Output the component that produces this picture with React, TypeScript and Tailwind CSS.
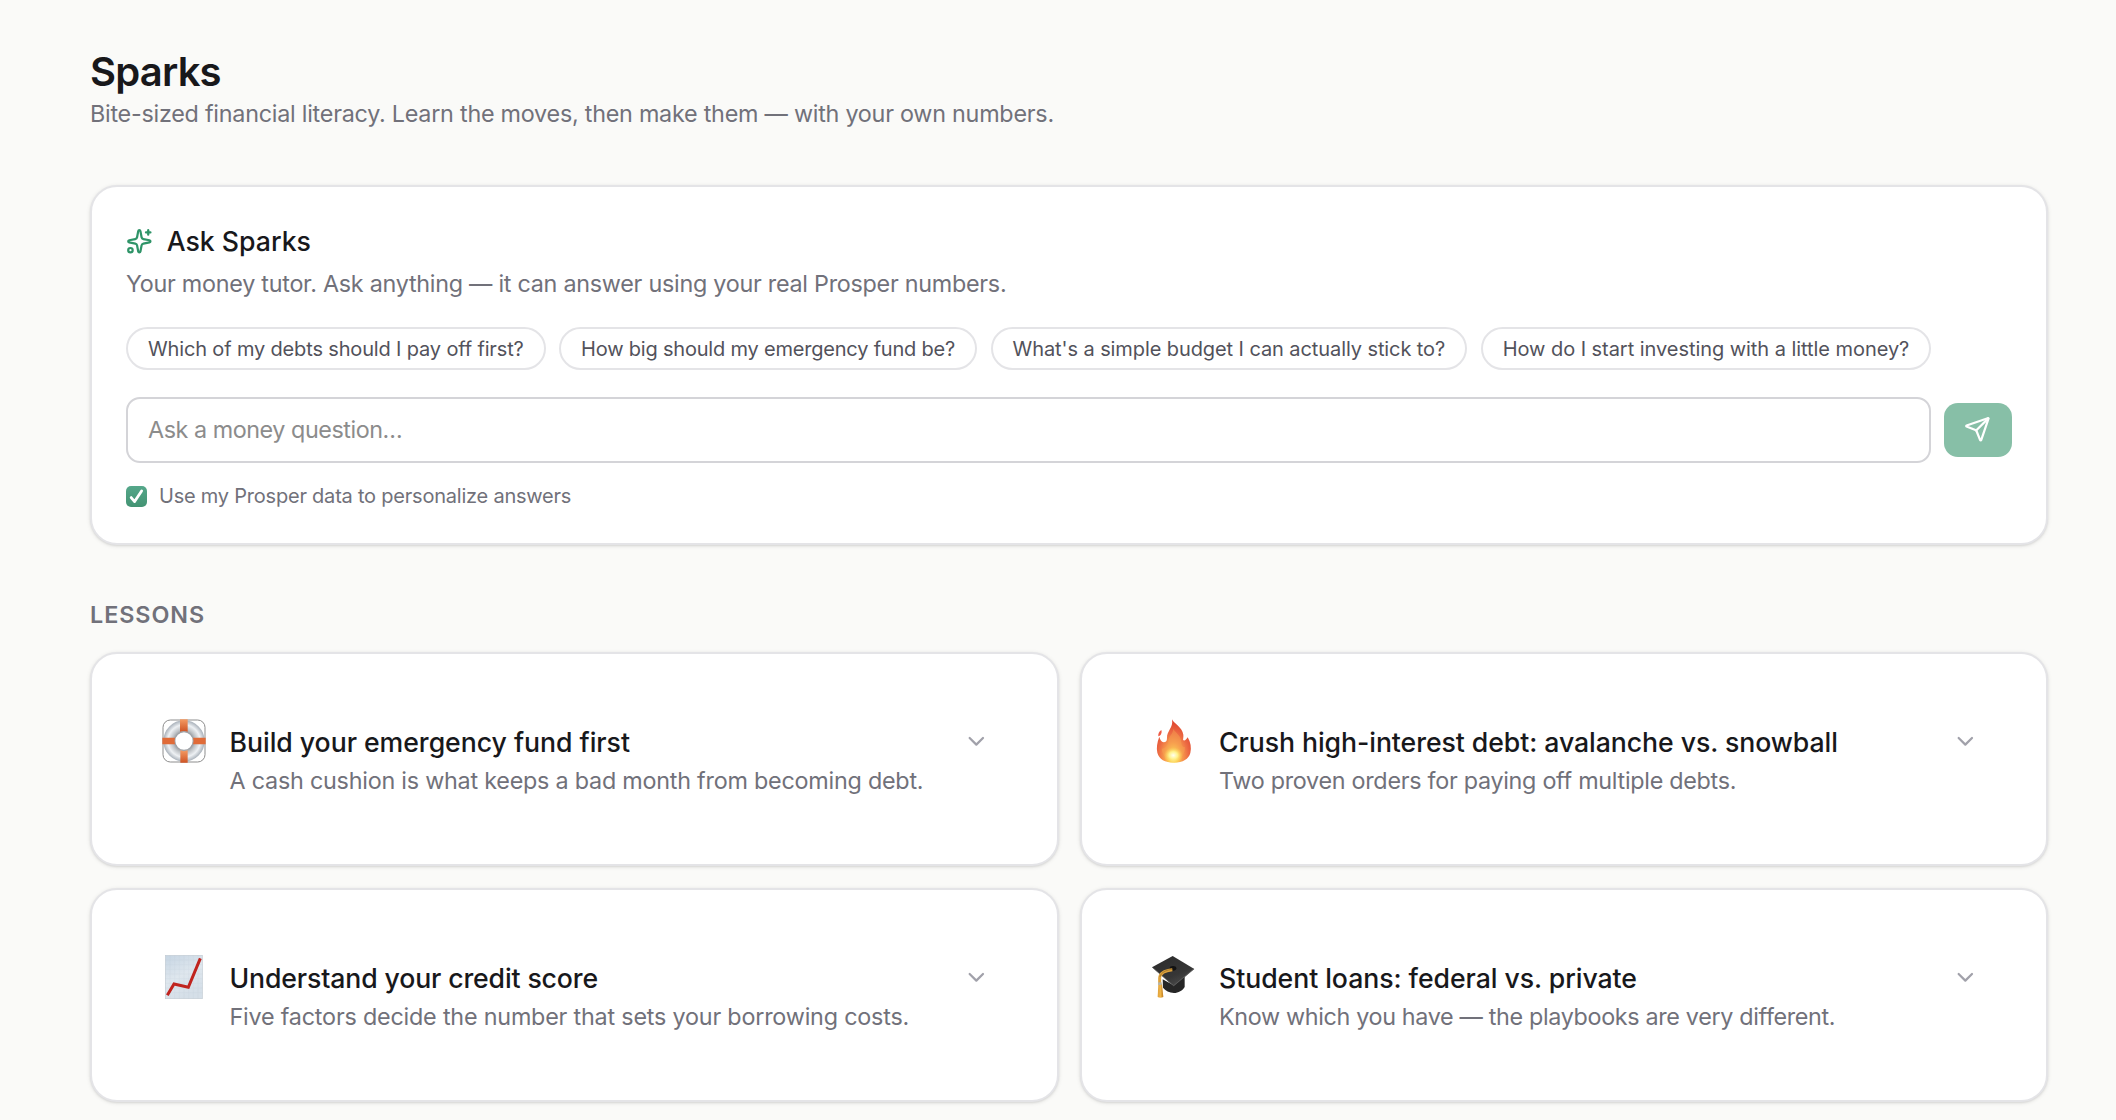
import { ChevronDown, Send } from 'lucide-react';
import { useState, type ReactNode } from 'react';

const suggestions = [
    { text: 'Which of my debts should I pay off first?', tracking: 'tracking-[-0.155px]' },
    { text: 'How big should my emergency fund be?', tracking: 'tracking-[-0.2px]' },
    { text: "What's a simple budget I can actually stick to?", tracking: 'tracking-[-0.09px]' },
    { text: 'How do I start investing with a little money?', tracking: 'tracking-[-0.05px]' },
];

function SparklesIcon() {
    return (
        <svg viewBox="0 0 24 24" fill="none" stroke="currentColor" strokeWidth="2" strokeLinecap="round" strokeLinejoin="round" className="size-[26.67px] text-[#2f9468]">
            <path d="M11.017 2.814a1 1 0 0 1 1.966 0l1.051 5.558a2 2 0 0 0 1.594 1.594l5.558 1.051a1 1 0 0 1 0 1.966l-5.558 1.051a2 2 0 0 0-1.594 1.594l-1.051 5.558a1 1 0 0 1-1.966 0l-1.051-5.558a2 2 0 0 0-1.594-1.594l-5.558-1.051a1 1 0 0 1 0-1.966l5.558-1.051a2 2 0 0 0 1.594-1.594z" />
            <path d="M20 2v4" />
            <path d="M22 4h-4" />
            <circle cx="4" cy="20" r="2" />
        </svg>
    );
}

function LifeRing() {
    return (
        <svg viewBox="36 57 132 132" className="size-11">
            <defs>
                <radialGradient id="ring" gradientUnits="userSpaceOnUse" cx="102" cy="123" r="62">
                    <stop offset="0.4" stopColor="#8f9398" />
                    <stop offset="0.56" stopColor="#bfc3c7" />
                    <stop offset="0.78" stopColor="#eef1f4" />
                    <stop offset="1" stopColor="#a9b1ba" />
                </radialGradient>
                <linearGradient id="band" x1="0" y1="0" x2="0" y2="1">
                    <stop offset="0" stopColor="#f49a62" />
                    <stop offset="1" stopColor="#cf5425" />
                </linearGradient>
            </defs>
            <rect x="39" y="60" width="126" height="126" rx="22" fill="none" stroke="#8d8d8d" strokeWidth="3" />
            <circle cx="102" cy="123" r="44" fill="none" stroke="url(#ring)" strokeWidth="36" />
            <path d="M90 58h23v37q-11-4-23 0z" fill="url(#band)" />
            <path d="M91 151q11 5 22 0v37H91z" fill="url(#band)" />
            <path d="M37 113h38q-3 10 0 20H37z" fill="#e06b38" />
            <path d="M129 113h38v20h-38q4-10 0-20z" fill="#e06b38" />
        </svg>
    );
}

function Flame() {
    return (
        <svg viewBox="36 57 132 132" className="size-11">
            <defs>
                <radialGradient id="flame" gradientUnits="userSpaceOnUse" cx="100" cy="170" r="105" gradientTransform="translate(36 0) scale(.64 1)">
                    <stop offset="0" stopColor="#fff8c8" />
                    <stop offset="0.18" stopColor="#fdd957" />
                    <stop offset="0.4" stopColor="#f79a4c" />
                    <stop offset="0.68" stopColor="#ec6a43" />
                    <stop offset="1" stopColor="#df452f" />
                </radialGradient>
                <radialGradient id="core">
                    <stop offset="0" stopColor="#fffef0" />
                    <stop offset="0.45" stopColor="#fff28a" />
                    <stop offset="1" stopColor="#fbc44c" stopOpacity="0" />
                </radialGradient>
            </defs>
            <path d="M96 58c4 12 31 23 34 46 1 9-2 15 0 17 5 2 9-3 13-9 9 15 12 32 8 47-5 18-22 29-49 29s-45-11-50-30c-3-14-1-31 6-48 2 9 6 16 13 17 7 0 10-4 10-13-1-21 20-31 15-56z" fill="url(#flame)" />
            <path d="M64 90c3 8-2 18-9 19-1-8 2-14 9-19z" fill="#ee5a45" />
            <path d="M100 87c9 14 24 20 24 41 0 9 4 13 11 14-1 20-10 36-34 36s-34-13-36-32c11 0 20-9 20-22 0-14 13-20 15-37z" fill="#f7a452" opacity="0.45" />
            <ellipse cx="100" cy="166" rx="29" ry="25" fill="url(#core)" />
        </svg>
    );
}

function RisingChart() {
    return (
        <svg viewBox="36 45 132 132" className="size-11">
            <defs>
                <linearGradient id="paper" x1="0" y1="0" x2="0.4" y2="1">
                    <stop offset="0" stopColor="#c6d5e3" />
                    <stop offset="0.55" stopColor="#dfe7ee" />
                    <stop offset="1" stopColor="#d5dfe8" />
                </linearGradient>
            </defs>
            <rect x="46" y="46" width="111" height="130" fill="url(#paper)" stroke="#c3ccd4" strokeWidth="2" />
            <path d="M60 46v130M74 46v130M88 46v130M102 46v130M116 46v130M130 46v130M144 46v130M46 60h111M46 74h111M46 88h111M46 102h111M46 116h111M46 130h111M46 144h111M46 158h111" stroke="#b9c6d2" strokeWidth="1" opacity="0.4" />
            <path d="M52 166l20-34 43 10 36-87" fill="none" stroke="#c0241e" strokeWidth="9" />
        </svg>
    );
}

function GradCap() {
    return (
        <svg viewBox="36 45 132 132" className="size-11">
            <defs>
                <linearGradient id="board" x1="0" y1="0" x2="0.6" y2="1">
                    <stop offset="0" stopColor="#2b2b2b" />
                    <stop offset="0.7" stopColor="#363636" />
                    <stop offset="1" stopColor="#4a4a4a" />
                </linearGradient>
                <linearGradient id="tassel" x1="0" y1="0" x2="1" y2="0">
                    <stop offset="0" stopColor="#e0a13a" />
                    <stop offset="0.5" stopColor="#f0b548" />
                    <stop offset="1" stopColor="#bd7a1e" />
                </linearGradient>
            </defs>
            <path d="M68 118l33 18 33-28v33c-6 11-19 18-32 18-14-1-26-7-33-16z" fill="#262626" />
            <path d="M98 48l65 39-62 52-65-57z" fill="url(#board)" />
            <path d="M37 82l64 55 61-51" fill="none" stroke="#666" strokeWidth="2" />
            <ellipse cx="99" cy="85" rx="10" ry="7" fill="#121212" />
            <path d="M97 89c-18 2-37 8-38 25v18" fill="none" stroke="#dda13b" strokeWidth="9" />
            <path d="M97 88c-18 2-35 9-37 23" fill="none" stroke="#7a5a22" strokeWidth="1.5" />
            <path d="M55 131h11l4 40q-9 5-17 0z" fill="url(#tassel)" />
            <path d="M54 127h11v8H54z" fill="#b9b4a4" />
        </svg>
    );
}

const lessons = [
    {
        icon: <LifeRing />,
        title: 'Build your emergency fund first',
        titleTracking: 'tracking-[-0.04px]',
        summary: 'A cash cushion is what keeps a bad month from becoming debt.',
        summaryTracking: 'tracking-[-0.225px]',
    },
    {
        icon: <Flame />,
        title: 'Crush high-interest debt: avalanche vs. snowball',
        titleTracking: 'tracking-[-0.07px]',
        summary: 'Two proven orders for paying off multiple debts.',
        summaryTracking: 'tracking-[-0.28px]',
    },
    {
        icon: <RisingChart />,
        title: 'Understand your credit score',
        titleTracking: 'tracking-[-0.14px]',
        summary: 'Five factors decide the number that sets your borrowing costs.',
        summaryTracking: 'tracking-[-0.195px]',
    },
    {
        icon: <GradCap />,
        title: 'Student loans: federal vs. private',
        titleTracking: 'tracking-[-0.06px]',
        summary: 'Know which you have — the playbooks are very different.',
        summaryTracking: 'tracking-[-0.335px]',
    },
];

function Card({ className, children }: { className: string; children: ReactNode }) {
    return (
        <div className={`rounded-[27px] border-2 border-[#e4e4e7] bg-white shadow-[0_1px_4px_rgba(0,0,0,0.1),0_1px_2px_rgba(0,0,0,0.08)] ${className}`}>
            {children}
        </div>
    );
}

function AskSparks() {
    const [question, setQuestion] = useState('');
    const [personalize, setPersonalize] = useState(true);

    return (
        <Card className="mt-[55px] h-[360px] px-[34px] pt-[34px]">
            <div className="flex h-10 items-center gap-[14px]">
                <SparklesIcon />
                <h2 className="text-[26.67px] leading-10 font-medium text-[#18181b]">Ask Sparks</h2>
            </div>
            <p className="mt-[6px] text-[23.33px] leading-[33px] tracking-[-0.26px] text-[#71717a]">
                Your money tutor. Ask anything — it can answer using your real Prosper numbers.
            </p>
            <div className="mt-[27px] flex gap-[13.5px]">
                {suggestions.map((s) => (
                    <button
                        key={s.text}
                        onClick={() => setQuestion(s.text)}
                        className={`h-[43px] rounded-full border-2 border-[#e4e4e7] px-5 pt-px text-xl leading-[27px] whitespace-nowrap text-[#52525b] ${s.tracking}`}
                    >
                        {s.text}
                    </button>
                ))}
            </div>
            <div className="mt-[27px] flex items-center gap-[13.3px]">
                <input
                    value={question}
                    onChange={(e) => setQuestion(e.target.value)}
                    placeholder="Ask a money question…"
                    className="h-[66px] min-w-0 flex-1 rounded-[14px] border-2 border-[#d4d4d8] px-5 pb-[2px] text-[23.33px] tracking-[-0.45px] outline-none placeholder:text-[#8c8c8c]"
                />
                <button className="flex h-[54px] w-[68px] items-center justify-center rounded-[14px] bg-[#87bfa7] pr-px pb-px text-white">
                    <Send className="size-[26.67px]" />
                </button>
            </div>
            <label className="mt-5 flex items-center gap-3 text-xl leading-[27px] tracking-[-0.22px] text-[#71717a]">
                <input type="checkbox" checked={personalize} onChange={(e) => setPersonalize(e.target.checked)} className="sr-only" />
                <span className="flex size-[21px] items-center justify-center rounded-[5px] bg-linear-to-b from-[#55a78a] to-[#439373]">
                    {personalize && (
                        <svg viewBox="0 0 21 21" fill="none" stroke="white" strokeWidth="2.8" strokeLinecap="round" strokeLinejoin="round" className="size-[21px]">
                            <path d="M5.2 11.6l3.4 4 7-10.6" />
                        </svg>
                    )}
                </span>
                Use my Prosper data to personalize answers
            </label>
        </Card>
    );
}

export default function App() {
    return (
        <div className="h-[1120px] overflow-hidden bg-[#fafaf8] pt-[45px] pr-[68px] pl-[90px] font-[Inter,sans-serif]">
            <h1 className="text-[40px] leading-[53px] font-semibold tracking-[-0.8px] text-[#18181b]">Sparks</h1>
            <p className="-mt-px text-[23.33px] leading-[33px] tracking-[-0.24px] text-[#71717a]">
                Bite-sized financial literacy. Learn the moves, then make them — with your own numbers.
            </p>

            <AskSparks />

            <h2 className="mt-[53px] text-[23.33px] leading-[33px] font-semibold tracking-[0.95px] text-[#71717a]">LESSONS</h2>
            <div className="mt-[21px] grid grid-cols-2 gap-x-[21px] gap-y-[22px]">
                {lessons.map((lesson) => (
                    <Card key={lesson.title} className="flex h-[214px] items-start pt-[65px] pr-[67px] pl-[70px]">
                        {lesson.icon}
                        <div className="mt-[3px] ml-[23.5px] flex-1">
                            <h3 className={`text-[26.67px] leading-10 font-medium text-[#18181b] ${lesson.titleTracking}`}>{lesson.title}</h3>
                            <p className={`mt-[2px] text-[23.33px] leading-[33px] text-[#71717a] ${lesson.summaryTracking}`}>{lesson.summary}</p>
                        </div>
                        <ChevronDown className="mt-[9px] size-[26.67px] text-[#a1a1aa]" />
                    </Card>
                ))}
            </div>
        </div>
    );
}
